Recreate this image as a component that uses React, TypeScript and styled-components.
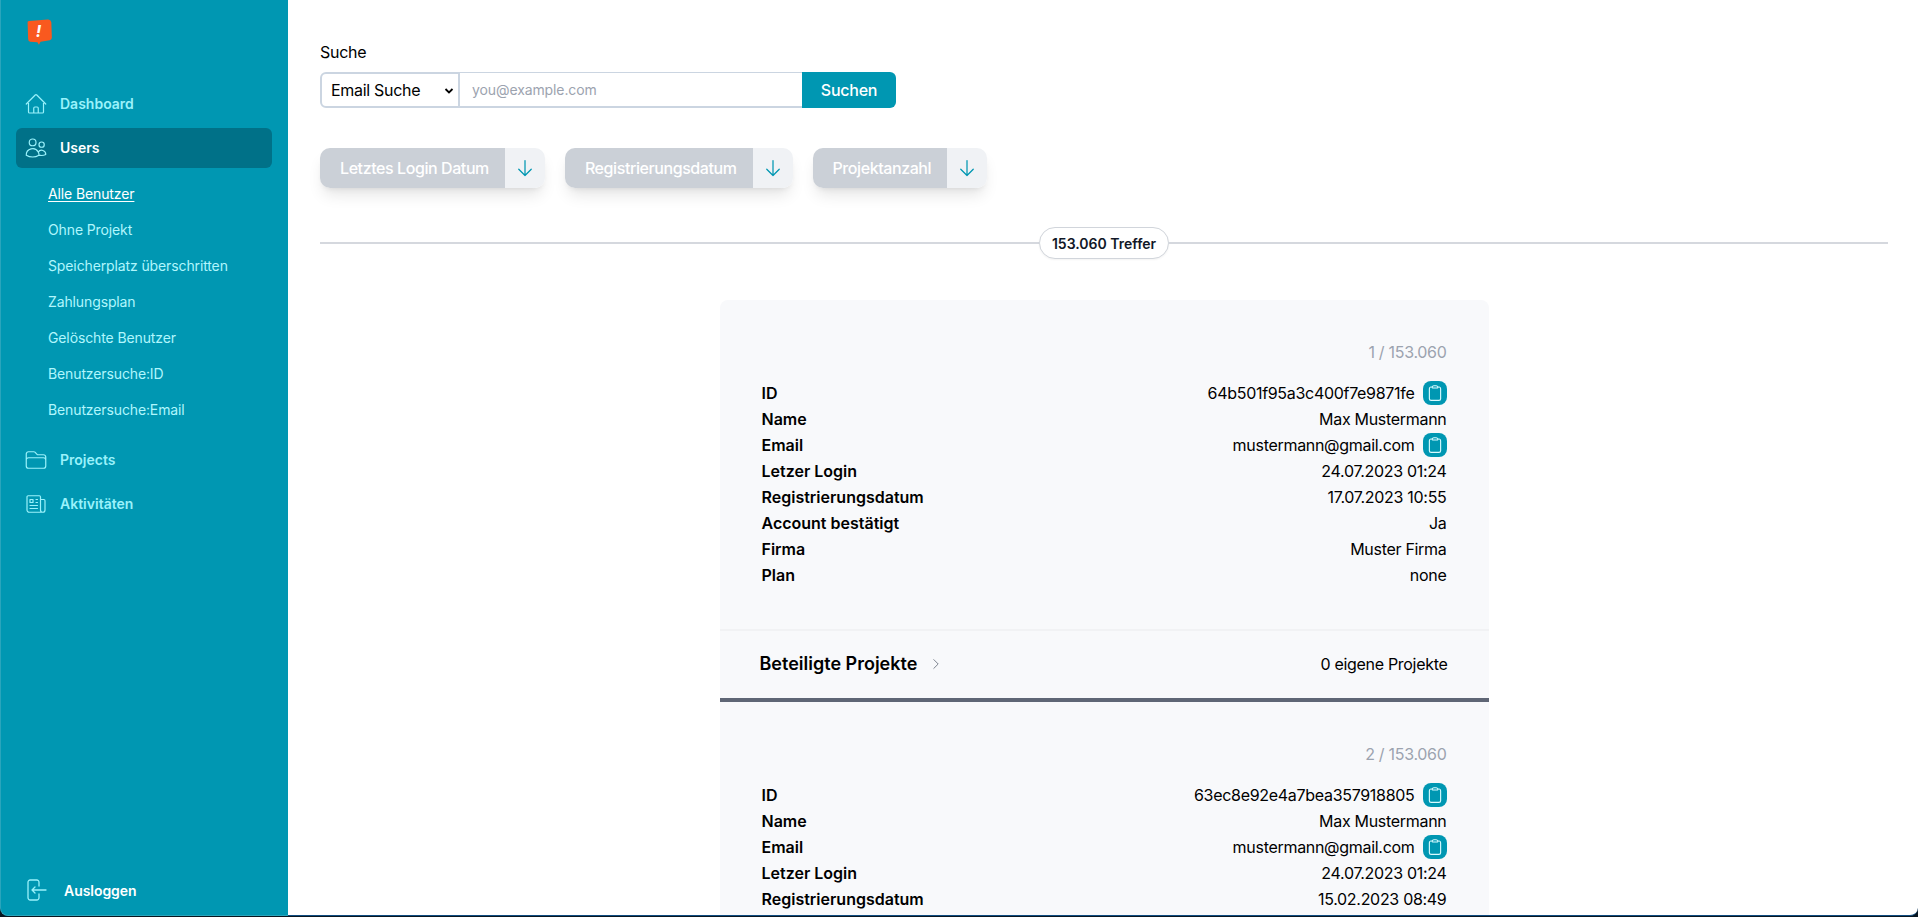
import React from "react";
import styled, { createGlobalStyle } from "styled-components";
import {
  HiOutlineHome,
  HiOutlineUsers,
  HiOutlineFolder,
  HiOutlineNewspaper,
  HiOutlineArrowDown,
  HiOutlineChevronRight,
  HiOutlineClipboard,
} from "react-icons/hi2";

const Global = createGlobalStyle`
  html, body { margin: 0; padding: 0; height: 100%; overflow: hidden; background: #fff; }
  body { font-family: Inter, "Liberation Sans", sans-serif; color: #111827; }
  * { box-sizing: border-box; }
`;

const Page = styled.div`
  display: flex;
  width: 1918px;
  height: 917px;
  overflow: hidden;
  background: #081620;
  padding-bottom: 1px;
`;

const Sidebar = styled.aside`
  width: 288px;
  flex: none;
  height: 916px;
  background: #0097b2;
  border-left: 1px solid #2aa5bc;
  border-bottom: 1px solid #2aa5bc;
  border-bottom-left-radius: 8px;
  display: flex;
  flex-direction: column;
  padding: 18px 16px 0 15px;
`;

const LogoWrap = styled.div`
  height: 32px;
  padding-left: 9px;
  margin-bottom: 34px;
`;

const Nav = styled.nav`
  display: flex;
  flex-direction: column;
  gap: 4px;
  flex: 1;
`;

const NavItem = styled.a<{ $active?: boolean }>`
  display: flex;
  align-items: center;
  height: 40px;
  padding-left: 8px;
  gap: 12px;
  border-radius: 6px;
  font-size: 14px;
  line-height: 20px;
  font-weight: 600;
  color: ${(p) => (p.$active ? "#ffffff" : "#9af2fb")};
  background: ${(p) => (p.$active ? "#007188" : "transparent")};
  svg {
    width: 24px;
    height: 24px;
    flex: none;
    color: #9af2fb;
  }
`;

const SubList = styled.div`
  display: flex;
  flex-direction: column;
  padding: 3px 0 9px 32px;
`;

const SubItem = styled.a<{ $active?: boolean }>`
  display: flex;
  align-items: center;
  height: 36px;
  font-size: 14px;
  font-weight: 400;
  letter-spacing: -0.12px;
  color: ${(p) => (p.$active ? "#ffffff" : "#b0f6fd")};
  text-decoration: ${(p) => (p.$active ? "underline" : "none")};
  text-underline-offset: 2px;
`;

const Logout = styled.a`
  display: flex;
  align-items: center;
  gap: 16px;
  height: 24px;
  padding: 0 0 0 8px;
  margin-bottom: 13px;
  font-size: 14px;
  font-weight: 600;
  letter-spacing: -0.05px;
  color: #fff;
  svg {
    width: 24px;
    height: 24px;
    color: #9af2fb;
    flex: none;
  }
`;

const Main = styled.main`
  flex: 1;
  min-width: 0;
  height: 916px;
  overflow: hidden;
  background: #fff;
  border-bottom: 1px solid #0f4c81;
  border-bottom-right-radius: 8px;
  padding: 42px 30px 0 32px;
`;

const SearchLabel = styled.label`
  display: block;
  font-size: 16px;
  line-height: 20px;
  font-weight: 400;
  letter-spacing: -0.3px;
  color: #000;
  margin-bottom: 10px;
`;

const SearchRow = styled.div`
  display: flex;
  width: 576px;
  height: 36px;
  margin-bottom: 40px;
`;

const SelectWrap = styled.div`
  position: relative;
  width: 140px;
  flex: none;
`;

const SelectBox = styled.select`
  appearance: none;
  width: 100%;
  height: 100%;
  background: #fff;
  border: 2px solid #cbd5e1;
  border-radius: 6px 0 0 6px;
  padding: 0 0 0 9px;
  font: 400 16px Inter, sans-serif;
  letter-spacing: -0.3px;
  color: #000;
  outline: none;
`;

const SelectChevron = styled.svg`
  position: absolute;
  right: 6px;
  top: 15px;
  width: 10px;
  height: 8px;
  pointer-events: none;
`;

const EmailInput = styled.input`
  flex: 1;
  min-width: 0;
  height: 100%;
  border: 0 solid #cbd5e1;
  border-width: 1px 0 2px 0;
  padding: 0 0 0 12px;
  font: 400 14px Inter, sans-serif;
  letter-spacing: -0.1px;
  outline: none;
  &::placeholder { color: #9ca3af; opacity: 1; }
`;

const SearchButton = styled.button`
  width: 94px;
  flex: none;
  border: 0;
  background: #0097b2;
  color: #fff;
  font: 500 16px Inter, sans-serif;
  letter-spacing: -0.25px;
  border-radius: 0 6px 6px 0;
`;

const SortRow = styled.div`
  display: flex;
  gap: 20px;
  margin-bottom: 39px;
`;

const SortButton = styled.div`
  display: flex;
  height: 40px;
  border-radius: 10px;
  overflow: hidden;
  box-shadow: 0 10px 15px -3px rgba(0, 0, 0, 0.1), 0 4px 6px -4px rgba(0, 0, 0, 0.1);
`;

const SortLabel = styled.span`
  display: flex;
  align-items: center;
  padding: 0 16px 0 20px;
  background: #cbd0d7;
  color: #fff;
  font-size: 16px;
  font-weight: 500;
  letter-spacing: -0.42px;
  white-space: nowrap;
`;

const SortIcon = styled.span`
  display: flex;
  align-items: center;
  justify-content: center;
  width: 40px;
  background: #f0f2f5;
  color: #0097b2;
  svg { width: 20px; height: 20px; }
`;

const Divider = styled.div`
  display: flex;
  align-items: center;
  height: 32px;
  margin-bottom: 41px;
  &::before, &::after {
    content: "";
    flex: 1;
    height: 2px;
    background: #d5d8de;
  }
`;

const Pill = styled.span`
  flex: none;
  height: 32px;
  padding: 0 12px;
  display: flex;
  align-items: center;
  border: 1px solid #d1d5db;
  border-radius: 16px;
  background: #fff;
  font-size: 14px;
  font-weight: 600;
  color: #111827;
  box-shadow: 0 1px 2px rgba(0, 0, 0, 0.05);
`;

const Cards = styled.div`
  width: 769px;
  margin: 0 auto;
  background: #f8f9fb;
  border-radius: 8px 8px 0 0;
`;

const Card = styled.section`
  border-bottom: 4px solid #5f6675;
`;

const CardBody = styled.div`
  padding: 40px 42px 41px 42px;
  border-bottom: 2px solid #f1f2f4;
`;

const Counter = styled.div`
  text-align: right;
  font-size: 16px;
  line-height: 24px;
  letter-spacing: -0.3px;
  color: #9ca3af;
  margin-bottom: 16px;
`;

const FieldRow = styled.div`
  display: flex;
  align-items: center;
  justify-content: space-between;
  height: 26px;
  font-size: 16px;
  color: #000;
`;

const FieldLabel = styled.span`
  font-weight: 600;
`;

const FieldValue = styled.span`
  display: flex;
  align-items: center;
  gap: 8px;
  letter-spacing: -0.3px;
`;

const CopyButton = styled.span`
  display: flex;
  align-items: center;
  justify-content: center;
  width: 24px;
  height: 24px;
  border-radius: 8px;
  background: #0097b2;
  color: #d8fbff;
  svg { width: 18px; height: 18px; }
`;

const CardFooter = styled.div`
  display: flex;
  align-items: center;
  justify-content: space-between;
  height: 67px;
  padding: 0 41px 2px 40px;
`;

const FooterTitle = styled.span`
  display: flex;
  align-items: center;
  gap: 10px;
  font-size: 18px;
  font-weight: 600;
  color: #000;
  svg { width: 14px; height: 14px; color: #6b7280; margin-left: 2px; }
`;

const FooterCount = styled.span`
  font-size: 16px;
  letter-spacing: -0.3px;
  color: #000;
`;

const Logo = () => (
  <svg width="31" height="33" viewBox="0 0 30 32" fill="none">
    <path d="M2.5 4.5 Q2 3 4 2.8 L22 1.5 Q25 1.3 25.5 4 L26 19 Q26 21 24 21.5 L15 23 L13.5 26 L12 23.5 L5 23 Q3 22.5 3 20 Z" fill="#f9591f" />
    <text x="10.5" y="18" fill="#fff" fontFamily="Inter, sans-serif" fontSize="16" fontWeight="700" fontStyle="italic">!</text>
  </svg>
);

const LogoutIcon = () => (
  <svg viewBox="0 0 24 24" fill="none" stroke="currentColor" strokeWidth="1.3" strokeLinecap="round" strokeLinejoin="round">
    <path d="M15 8V4.2A2.2 2.2 0 0 0 12.8 2H6.2A2.2 2.2 0 0 0 4 4.2v15.6A2.2 2.2 0 0 0 6.2 22h6.6a2.2 2.2 0 0 0 2.2-2.2V16" />
    <path d="M11 9l-3 3 3 3M8 12h14" />
  </svg>
);

type Field = { label: string; value: string; copy?: boolean };

const makeFields = (id: string, reg: string): Field[] => [
  { label: "ID", value: id, copy: true },
  { label: "Name", value: "Max Mustermann" },
  { label: "Email", value: "mustermann@gmail.com", copy: true },
  { label: "Letzer Login", value: "24.07.2023 01:24" },
  { label: "Registrierungsdatum", value: reg },
  { label: "Account bestätigt", value: "Ja" },
  { label: "Firma", value: "Muster Firma" },
  { label: "Plan", value: "none" },
];

const records = [
  { n: "1 / 153.060", fields: makeFields("64b501f95a3c400f7e9871fe", "17.07.2023 10:55") },
  { n: "2 / 153.060", fields: makeFields("63ec8e92e4a7bea357918805", "15.02.2023 08:49") },
];

const subItems = [
  "Alle Benutzer",
  "Ohne Projekt",
  "Speicherplatz überschritten",
  "Zahlungsplan",
  "Gelöschte Benutzer",
  "Benutzersuche:ID",
  "Benutzersuche:Email",
];

const sorts = ["Letztes Login Datum", "Registrierungsdatum", "Projektanzahl"];

export default function App() {
  return (
    <Page>
      <Global />
      <Sidebar>
        <LogoWrap><Logo /></LogoWrap>
        <Nav>
          <NavItem><HiOutlineHome strokeWidth={1.2} />Dashboard</NavItem>
          <NavItem $active><HiOutlineUsers strokeWidth={1.2} />Users</NavItem>
          <SubList>
            {subItems.map((s, i) => (
              <SubItem key={s} $active={i === 0}>{s}</SubItem>
            ))}
          </SubList>
          <NavItem><HiOutlineFolder strokeWidth={1.2} />Projects</NavItem>
          <NavItem><HiOutlineNewspaper strokeWidth={1.2} />Aktivitäten</NavItem>
        </Nav>
        <Logout><LogoutIcon />Ausloggen</Logout>
      </Sidebar>
      <Main>
        <SearchLabel>Suche</SearchLabel>
        <SearchRow>
          <SelectWrap>
            <SelectBox defaultValue="email">
              <option value="email">Email Suche</option>
              <option value="id">ID Suche</option>
            </SelectBox>
            <SelectChevron viewBox="0 0 10 8" fill="none" stroke="#000" strokeWidth="1.8">
              <path d="M1.5 2 5 5.5 8.5 2" />
            </SelectChevron>
          </SelectWrap>
          <EmailInput placeholder="you@example.com" />
          <SearchButton>Suchen</SearchButton>
        </SearchRow>
        <SortRow>
          {sorts.map((s) => (
            <SortButton key={s}>
              <SortLabel>{s}</SortLabel>
              <SortIcon><HiOutlineArrowDown strokeWidth={1.5} /></SortIcon>
            </SortButton>
          ))}
        </SortRow>
        <Divider><Pill>153.060 Treffer</Pill></Divider>
        <Cards>
          {records.map((r) => (
            <Card key={r.n}>
              <CardBody>
                <Counter>{r.n}</Counter>
                {r.fields.map((f) => (
                  <FieldRow key={f.label}>
                    <FieldLabel>{f.label}</FieldLabel>
                    <FieldValue>
                      {f.value}
                      {f.copy && <CopyButton><HiOutlineClipboard strokeWidth={1.5} /></CopyButton>}
                    </FieldValue>
                  </FieldRow>
                ))}
              </CardBody>
              <CardFooter>
                <FooterTitle>Beteiligte Projekte <HiOutlineChevronRight strokeWidth={1.5} /></FooterTitle>
                <FooterCount>0 eigene Projekte</FooterCount>
              </CardFooter>
            </Card>
          ))}
        </Cards>
      </Main>
    </Page>
  );
}
